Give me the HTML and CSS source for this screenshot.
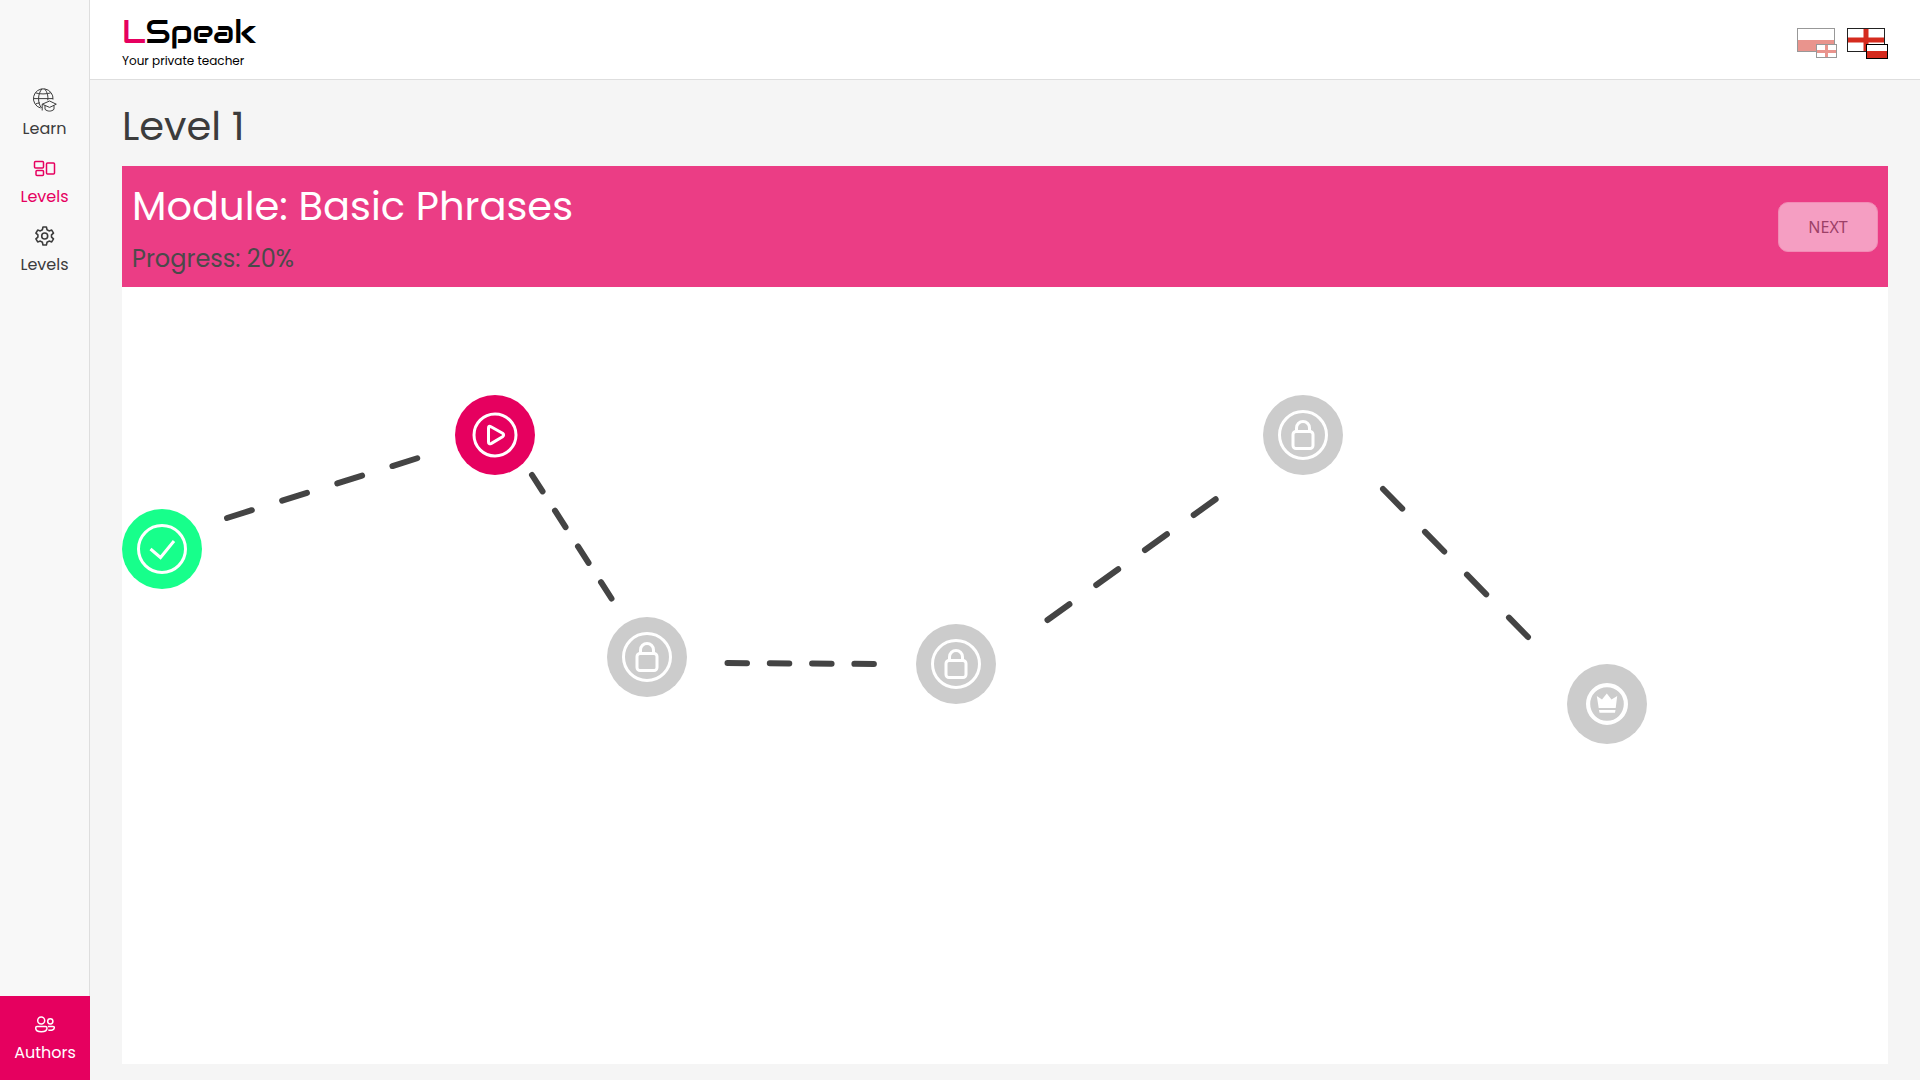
FILE: index.html
```html
<!DOCTYPE html>
<html lang="en">
<head>
  <meta charset="utf-8">
  <meta name="viewport" content="width=device-width, initial-scale=1">
  <title>LSpeak</title>
  <link rel="stylesheet" href="styles.css">
</head>
<body>
  <div class="app">
    <nav class="sidebar">
      <div class="sidebar-menu">
        <a class="nav-item" href="#learn">
          <svg class="nav-icon" viewBox="0 0 24 24" fill="none" stroke="currentColor" stroke-width="1">
            <path d="M7.500 20A9.800 9.800 0 1 1 20 11.500M9 .8C4.500 6 4.500 15 8.500 20M11.500 .8C14.500 4 15.300 8 14.800 12.300M2.500 4.800C6 6.300 14 6.300 17.800 4.800M.6 10.600H20M2.500 16C4 15.300 5.500 15 7 14.900"/>
            <path d="M9.200 16.200L16.600 13L23.300 16.200L16.600 19.400ZM12 17.600V21.300C14.500 23.700 18.500 23.700 21 21.300V17.600M9.200 16.200V22.500"/>
          </svg>
          <span>Learn</span>
        </a>
        <a class="nav-item nav-item-active" href="#levels">
          <svg class="nav-icon" viewBox="0 0 24 24" fill="none" stroke="currentColor" stroke-width="1.500">
            <rect x="1.500" y="5.500" width="9" height="6.500" rx="1"/>
            <rect x="3" y="14.500" width="7.500" height="5" rx="1"/>
            <rect x="13.500" y="7" width="8" height="11" rx="1"/>
          </svg>
          <span>Levels</span>
        </a>
        <a class="nav-item" href="#settings">
          <svg class="nav-icon" viewBox="0 0 24 24" fill="none" stroke="currentColor" stroke-width="1.600" stroke-linejoin="round">
            <path d="M10 3H13.400L14 5.700L16.100 6.900L18.700 6.100L20.500 9.100L18.500 10.900V13.100L20.500 14.900L18.700 17.900L16.100 17.100L14 18.300L13.400 21H10L9.400 18.300L7.300 17.100L4.700 17.900L2.900 14.900L4.900 13.100V10.900L2.900 9.100L4.700 6.100L7.300 6.900L9.400 5.700Z"/>
            <circle cx="11.700" cy="12" r="3"/>
          </svg>
          <span>Levels</span>
        </a>
      </div>
      <a class="nav-item nav-authors" href="#authors">
        <svg class="nav-icon" viewBox="0 0 24 24" fill="none" stroke="currentColor" stroke-width="1.500">
          <circle cx="8.200" cy="8.500" r="3.500"/>
          <circle cx="17.300" cy="9.300" r="2.600"/>
          <path d="M4 14.500H12.500Q14 14.500 14 16C14 18.700 11.500 19.800 8.300 19.800S2.700 18.700 2.700 16Q2.700 14.500 4 14.500Z"/>
          <path d="M15 14.500H20Q21.400 14.500 21.300 15.800C21 18 18.500 18.800 15.300 18.100"/>
        </svg>
        <span>Authors</span>
      </a>
    </nav>

    <div class="page">
      <header class="header">
        <a class="brand" href="#home">
          <span class="brand-name"><span class="brand-accent">L</span>Speak</span>
          <span class="brand-tagline">Your private teacher</span>
        </a>
        <div class="languages">
          <button class="language language-inactive" type="button" aria-label="Polish, learning English">
            <svg class="flag" viewBox="0 0 41 31">
              <rect x="1" y="1" width="37" height="22" fill="#fff"/>
              <rect x="1" y="12" width="37" height="11" fill="#d52b1e"/>
              <rect x=".5" y=".5" width="37" height="23" fill="none" stroke="#333"/>
              <rect x="19.500" y="16.500" width="20" height="13" fill="#fff" stroke="#333"/>
              <path d="M29.500 17V29M20 23.500H39" stroke="#d52b1e" stroke-width="3"/>
            </svg>
          </button>
          <button class="language" type="button" aria-label="English, learning Polish">
            <svg class="flag" viewBox="0 0 41 31">
              <rect x=".5" y=".5" width="37" height="23" fill="#fff"/>
              <path d="M19 1V23M1 12H37" stroke="#d52b1e" stroke-width="5"/>
              <rect x=".5" y=".5" width="37" height="23" fill="none" stroke="#222"/>
              <rect x="19.500" y="16.500" width="21" height="14" fill="#fff"/>
              <rect x="20" y="23" width="20" height="7" fill="#d52b1e"/>
              <rect x="19.500" y="16.500" width="21" height="14" fill="none" stroke="#000"/>
            </svg>
          </button>
        </div>
      </header>

      <main class="content">
        <h1 class="title">Level 1</h1>
        <section class="module">
          <div class="module-banner">
            <div class="module-info">
              <h2 class="module-name">Module: Basic Phrases</h2>
              <p class="module-progress">Progress: 20%</p>
            </div>
            <button class="next" type="button" disabled>NEXT</button>
          </div>
          <div class="map">
            <svg class="trail" aria-hidden="true">
              <path d="M105 231L296 171" stroke-dasharray="26 31.800"/>
              <path d="M410 188L489.500 311.500" stroke-dasharray="19.500 23"/>
              <path d="M605.500 376L752 377" stroke-dasharray="19.500 22.800"/>
              <path d="M925.500 333L1094 212" stroke-dasharray="27 33"/>
              <path d="M1261 202L1406 350" stroke-dasharray="27.500 32.500"/>
            </svg>
            <button class="node node-start node-done" type="button" aria-label="Lesson 1, completed">
              <svg class="node-icon" viewBox="0 0 50 50"><circle cx="25" cy="25" r="23.500"/><path d="M13.500 25L23.500 33.500L37 17"/></svg>
            </button>
            <button class="node node-second node-current" type="button" aria-label="Lesson 2, play">
              <svg class="node-icon" viewBox="0 0 50 50"><circle cx="25" cy="25" r="21"/><path d="M18.500 18Q18.500 15.500 21 16.800L32.500 23.300Q34.700 25 32.500 26.700L21.500 33.300Q18.500 34.700 18.500 32Z"/></svg>
            </button>
            <button class="node node-third" type="button" aria-label="Lesson 3, locked">
              <svg class="node-icon" viewBox="0 0 50 50"><circle cx="25" cy="25" r="23.500"/><rect x="15" y="21.500" width="20" height="17" rx="3"/><path d="M18.500 21.500V18A6.500 6.500 0 0 1 31.500 18V21.500"/></svg>
            </button>
            <button class="node node-fourth" type="button" aria-label="Lesson 4, locked">
              <svg class="node-icon" viewBox="0 0 50 50"><circle cx="25" cy="25" r="23.500"/><rect x="15" y="21.500" width="20" height="17" rx="3"/><path d="M18.500 21.500V18A6.500 6.500 0 0 1 31.500 18V21.500"/></svg>
            </button>
            <button class="node node-fifth" type="button" aria-label="Lesson 5, locked">
              <svg class="node-icon" viewBox="0 0 50 50"><circle cx="25" cy="25" r="23.500"/><rect x="15" y="21.500" width="20" height="17" rx="3"/><path d="M18.500 21.500V18A6.500 6.500 0 0 1 31.500 18V21.500"/></svg>
            </button>
            <button class="node node-final" type="button" aria-label="Final lesson, locked">
              <svg class="node-icon" viewBox="0 0 50 50"><circle cx="25" cy="25" r="18.900" stroke-width="4.200"/><path class="solid" d="M14.800 17L20 20.500L24.800 14.500L29.500 20.500L35.200 17L33.700 29H16.700ZM17 31H33.500L33 33.700H17.500Z"/></svg>
            </button>
          </div>
        </section>
      </main>
    </div>
  </div>
</body>
</html>
```

FILE: styles.css
```css
* {
  box-sizing: border-box;
}

body {
  margin: 0;
  background: #f5f5f5;
  color: #3c3c3c;
  font-family: Poppins, Inter, sans-serif;
  font-size: 16px;
  line-height: 24px;
}

button {
  padding: 0;
  border: 0;
  background: none;
  font: inherit;
  cursor: pointer;
}

a {
  color: inherit;
  text-decoration: none;
}

svg {
  display: block;
}

.app {
  display: flex;
  min-height: 100vh;
}

/* Sidebar */

.sidebar {
  display: flex;
  flex: none;
  flex-direction: column;
  justify-content: space-between;
  width: 90px;
  background: #f8f8f8;
}

.sidebar-menu {
  display: flex;
  flex: 1;
  flex-direction: column;
  gap: 15px;
  padding-top: 88px;
  border-right: 1px solid #dedede;
}

.nav-item {
  display: flex;
  flex-direction: column;
  align-items: center;
  gap: 5px;
}

.nav-item-active {
  color: #e6005f;
}

.nav-icon {
  width: 24px;
  height: 24px;
}

.nav-authors {
  padding: 16px 0 15px;
  background: #e6005f;
  color: #fff;
}

/* Header */

.page {
  display: flex;
  flex: 1;
  flex-direction: column;
  min-width: 0;
}

.header {
  display: flex;
  align-items: flex-end;
  justify-content: space-between;
  height: 80px;
  padding: 0 32px 9px;
  border-bottom: 1px solid #dedede;
  background: #fff;
}

.brand {
  display: flex;
  flex-direction: column;
  color: #000;
}

.brand-name {
  font-family: Audiowide, "DejaVu Sans", sans-serif;
  font-size: 32px;
  font-weight: 400;
  line-height: 40px;
}

.brand-accent {
  color: #e6005f;
}

.brand-tagline {
  font-size: 12px;
  line-height: 18px;
}

.languages {
  display: flex;
  gap: 9px;
  padding-bottom: 11px;
}

.language-inactive {
  opacity: 0.5;
}

.flag {
  width: 41px;
  height: 31px;
}

/* Module */

.content {
  display: flex;
  flex: 1;
  flex-direction: column;
  gap: 10px;
  padding: 16px 32px;
}

.title,
.module-name {
  margin: 0;
  font-size: 40px;
  font-weight: 400;
  line-height: 60px;
}

.module {
  display: flex;
  flex: 1;
  flex-direction: column;
}

.module-banner {
  display: flex;
  align-items: center;
  justify-content: space-between;
  padding: 10px;
  background: #eb3d85;
}

.module-info {
  display: flex;
  flex-direction: column;
  gap: 5px;
}

.module-name {
  color: #fff;
}

.module-progress {
  margin: 0;
  color: #4a4a4a;
  font-size: 24px;
  line-height: 36px;
}

.next {
  width: 100px;
  height: 50px;
  border: 1px solid #f28bb5;
  border-radius: 10px;
  background: #f59ec2;
  color: #9c4067;
  font-family: "Noto Sans", sans-serif;
  cursor: default;
}

/* Lesson map */

.map {
  position: relative;
  flex: 1;
  min-height: 480px;
  overflow: auto;
  background: #fff;
}

.trail {
  width: 100%;
  height: 480px;
  overflow: visible;
  fill: none;
  stroke: #444;
  stroke-width: 6px;
  stroke-linecap: round;
}

.node {
  position: absolute;
  display: flex;
  align-items: center;
  justify-content: center;
  width: 80px;
  height: 80px;
  border-radius: 50%;
  background: #ccc;
}

.node-done {
  background: #17ff8b;
}

.node-current {
  background: #e6005f;
}

.node-icon {
  width: 50px;
  height: 50px;
  fill: none;
  stroke: #fff;
  stroke-width: 3;
}

.solid {
  fill: #fff;
  stroke: none;
}

.node-start {
  top: 222px;
  left: 0;
}

.node-second {
  top: 108px;
  left: 333px;
}

.node-third {
  top: 330px;
  left: 485px;
}

.node-fourth {
  top: 337px;
  left: 794px;
}

.node-fifth {
  top: 108px;
  left: 1141px;
}

.node-final {
  top: 377px;
  left: 1445px;
}
```
